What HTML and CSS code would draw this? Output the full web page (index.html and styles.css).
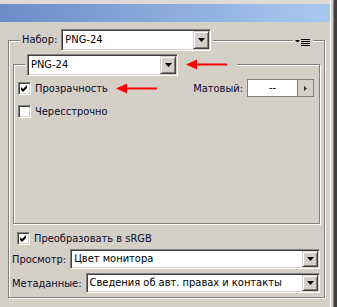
FILE: index.html
```html
<!DOCTYPE html>
<html>
<head>
<meta charset="utf-8">
<link rel="stylesheet" href="styles.css">
</head>
<body>
<div class="win">
  <div class="main">
    <div class="topstrip"></div>
    <div class="titlebar"></div>
    <div class="content">
      <div class="group outer">
        <div class="ghead">
          <span class="glabel">Набор:</span>
          <span class="gsel">
            <span class="select s-preset"><span class="val">PNG-24</span><span class="btn"><svg width="7" height="4" viewBox="0 0 7 4"><path d="M0 0H7L3.5 4Z" fill="#000"/></svg></span></span>
          </span>
          <span class="spacer"></span>
          <span class="menuicon">
            <svg width="16" height="8" viewBox="0 0 16 8"><path d="M0 1H5L2.5 3.5Z" fill="#000"/><rect x="6" y="0" width="9" height="1" fill="#000"/><rect x="6" y="2" width="9" height="1" fill="#000"/><rect x="6" y="4" width="9" height="1" fill="#000"/><rect x="6" y="6" width="9" height="1" fill="#000"/></svg>
          </span>
        </div>
        <div class="group inner">
          <div class="ghead ihead">
            <span class="isel">
              <span class="select s-format"><span class="val">PNG-24</span><span class="btn"><svg width="7" height="4" viewBox="0 0 7 4"><path d="M0 0H7L3.5 4Z" fill="#000"/></svg></span></span>
            </span>
          </div>
          <div class="row r1">
            <span class="cb"><svg width="7" height="7" viewBox="0 0 7 7"><path d="M0 2L2 4L6 0V3L2 7L0 5Z" fill="#000"/></svg></span>
            <span class="cbtext">Прозрачность</span>
            <span class="mlabel">Матовый:</span>
            <span class="matte"><span class="mval">--</span><span class="mbtn"><svg width="3" height="5" viewBox="0 0 3 5"><path d="M0 0L3 2.5L0 5Z" fill="#303030"/></svg></span></span>
          </div>
          <div class="row r2">
            <span class="cb"></span>
            <span class="cbtext">Чересстрочно</span>
          </div>
        </div>
        <div class="row srgb">
          <span class="cb"><svg width="7" height="7" viewBox="0 0 7 7"><path d="M0 2L2 4L6 0V3L2 7L0 5Z" fill="#000"/></svg></span>
          <span class="cbtext">Преобразовать в sRGB</span>
        </div>
        <div class="frow f1">
          <span class="flabel">Просмотр:</span>
          <span class="select s-wide"><span class="val">Цвет монитора</span><span class="btn"><svg width="7" height="4" viewBox="0 0 7 4"><path d="M0 0H7L3.5 4Z" fill="#000"/></svg></span></span>
        </div>
        <div class="frow f2">
          <span class="flabel">Метаданные:</span>
          <span class="select s-wide"><span class="val">Сведения об авт. правах и контакты</span><span class="btn"><svg width="7" height="4" viewBox="0 0 7 4"><path d="M0 0H7L3.5 4Z" fill="#000"/></svg></span></span>
        </div>
      </div>
    </div>
  </div>
  <div class="edge"></div>
  <svg class="arrow a1" width="42" height="11" viewBox="0 0 42 11"><path d="M0 5.5L11 0.5V4.5H41V6.5H11V10.5Z" fill="#ff0000"/></svg>
  <svg class="arrow a2" width="42" height="11" viewBox="0 0 42 11"><path d="M0 5.5L11 0.5V4.5H41V6.5H11V10.5Z" fill="#ff0000"/></svg>
</div>
</body>
</html>
```
FILE: styles.css
```css
* { box-sizing: border-box; }
html, body { margin: 0; padding: 0; }
body {
  font-family: "DejaVu Sans Condensed", "Liberation Sans", Arial, sans-serif;
  font-size: 11px;
  color: #0a0a28;
  background: #d4d0c8;
}
.win {
  position: relative;
  width: 337px;
  height: 307px;
  display: flex;
  background: #d4d0c8;
  overflow: hidden;
}
.main { width: 330px; display: flex; flex-direction: column; }
.topstrip { height: 4px; background: #dedbd4; }
.titlebar {
  height: 18px;
  background: linear-gradient(to right, #6c8cc8, #a8caf0);
}
.content { flex: 1; }
.edge {
  width: 7px;
  border-left: 1px solid #ffffff;
  box-shadow: inset -3px 0 0 #404040, inset -4px 0 0 #808080;
}

.group {
  border: 1px solid #808080;
  box-shadow: inset 1px 1px 0 #fff, 1px 1px 0 #fff;
}
.outer {
  margin: 18px 0 0 8px;
  width: 317px;
  height: 258px;
}
.ghead {
  display: flex;
  height: 22px;
  margin-top: -12px;
  padding: 0 11px 0 11px;
  align-items: stretch;
}
.glabel {
  background: #d4d0c8;
  padding: 0 4px 0 2px;
  line-height: 22px;
}
.gsel { background: #d4d0c8; padding-right: 2px; display: flex; }
.spacer { flex: 1; }
.menuicon {
  background: #d4d0c8;
  width: 20px;
  display: flex;
  align-items: center;
  justify-content: center;
  padding-top: 5px;
}

.select {
  display: flex;
  height: 22px;
  border: 1px solid;
  border-color: #808080 #fff #fff #808080;
  box-shadow: inset 1px 1px 0 #404040, inset -1px -1px 0 #d4d0c8;
  padding: 1px;
  background: #fff;
  color: #000;
}
.s-preset { width: 150px; }
.val { flex: 1; padding-left: 2px; line-height: 18px; white-space: nowrap; overflow: hidden; }
.btn {
  width: 16px;
  background: #d4d0c8;
  border: 1px solid;
  border-color: #d4d0c8 #404040 #404040 #d4d0c8;
  box-shadow: inset 1px 1px 0 #fff, inset -1px -1px 0 #808080;
  display: flex;
  align-items: center;
  justify-content: center;
}

.inner {
  margin: 13px 0 0 4px;
  width: 307px;
  height: 160px;
}
.ihead { margin-top: -11px; padding: 0; }
.isel {
  background: #d4d0c8;
  margin-left: 11px;
  padding: 0 59px 0 2px;
  display: flex;
}
.s-format { width: 151px; }

.row {
  display: flex;
  align-items: center;
  height: 18px;
}
.r1 { margin-top: 3px; padding: 0 5px 0 4px; }
.r2 { margin-top: 5px; padding-left: 4px; }
.cb {
  width: 13px;
  height: 13px;
  border: 1px solid;
  border-color: #808080 #fff #fff #808080;
  box-shadow: inset 1px 1px 0 #404040, inset -1px -1px 0 #d4d0c8;
  background: #fff;
  display: flex;
  align-items: center;
  justify-content: center;
}
.cbtext { margin-left: 4px; }
.mlabel { margin-left: auto; margin-right: 4px; }
.matte {
  display: flex;
  width: 67px;
  height: 18px;
  border: 1px solid #808080;
  background: #fff;
  color: #000;
}
.mval { flex: 1; text-align: center; line-height: 16px; }
.mbtn {
  width: 16px;
  border-left: 1px solid #808080;
  background: #d4d0c8;
  display: flex;
  align-items: center;
  justify-content: center;
}

.srgb { margin-top: 5px; padding-left: 8px; }
.frow {
  display: flex;
  align-items: center;
  padding: 0 4px 0 3px;
}
.f1 { margin-top: 2px; }
.f2 { margin-top: 4px; }
.flabel { margin-right: 4px; }
.s-wide { flex: 1; height: 20px; }
.s-wide .val { line-height: 16px; }

.arrow { position: absolute; }
.a1 { left: 186px; top: 59px; }
.a2 { left: 116px; top: 83px; }
```
